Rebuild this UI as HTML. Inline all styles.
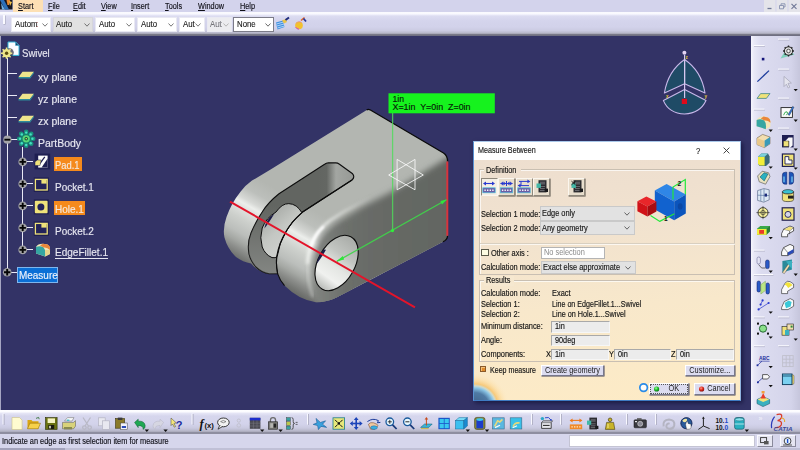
<!DOCTYPE html>
<html lang="en">
<head>
<meta charset="utf-8">
<title>Swivel - Measure Between</title>
<style>
*{box-sizing:border-box;margin:0;padding:0}
html,body{width:800px;height:450px;overflow:hidden;background:#333366}
body{position:relative;font-family:"Liberation Sans",sans-serif;font-size:8px;color:#1c1c24}
.abs{position:absolute}
.sx{display:inline-block;transform-origin:0 50%;white-space:nowrap}
/* ---------- top bars ---------- */
#menubar{position:absolute;left:0;top:0;width:800px;height:12px;background:#d3d3ec}
#menubar .mi{position:absolute;top:.9px;height:12px;line-height:11.5px;font-size:8.3px;color:#101018;-webkit-text-stroke:.15px #101018}
#menubar .mi .sx{transform:scaleX(.88)}
#startbg{position:absolute;left:13px;top:0;width:30px;height:12px;background:#fde0b4}
#winbtns{position:absolute;left:764px;top:0;width:36px;height:11.5px;background:#e4e4ea}
#tb{position:absolute;left:0;top:12px;width:800px;height:22px;background:linear-gradient(#f6f6fd 0,#fdfdff 1px,#f2f2fc 2.4px,#dcdcf1 4px,#d4d4ec 9px,#d2d2ea 15px,#cbcbe2 18.5px,#b8b8ca 21px,#9e9eac 22px)}
#tbline{position:absolute;left:0;top:34px;width:800px;height:2px;background:linear-gradient(#7e7e8c,#6a6a7e)}
.cb{position:absolute;top:17px;height:15px;background:#fff;border:1px solid #e9e9f2;font-size:8.7px;line-height:13.4px;color:#1a1a1a;overflow:hidden;-webkit-text-stroke:.12px #1a1a1a}
.cb .sx{transform:scaleX(.9);margin-left:2.6px}
.cb.g{background:#e1e1e1;border-color:#d6d6da}
.cb.d{background:#ececf0;color:#9a9aa4}
.chev{position:absolute;right:2.5px;top:4.5px;width:6px;height:4px}
/* ---------- viewport ---------- */
#vp{position:absolute;left:0;top:36px;width:751px;height:374px;background:#333366;overflow:hidden}
#vpl{position:absolute;left:0;top:36px;width:1.3px;height:374px;background:#a6a6c2}
/* ---------- tree ---------- */
.tt{position:absolute;font-size:11.6px;line-height:14px;height:14px;color:#e6e6f0;white-space:nowrap;margin-top:.6px;-webkit-text-stroke:.18px #e6e6f0}
.tt .sx{transform:scaleX(.87)}
.tl{position:absolute;background:#e9e9f6}
/* ---------- bottom ---------- */
#bt{position:absolute;left:0;top:410.4px;width:800px;height:22.6px;background:linear-gradient(#fefeff 0,#fbfbff 1.8px,#e4e4f5 3.4px,#d6d6ed 6px,#d3d3eb 14px,#cacae0 18px,#b6b6c8 21px,#9c9cac 22.6px)}
#sb{position:absolute;left:0;top:433px;width:800px;height:17px;background:#d6d6ec}
#sbtxt{position:absolute;left:2px;top:436.8px;font-size:8.2px;line-height:10px;color:#101018;-webkit-text-stroke:.15px #101018}
#sbtxt .sx{transform:scaleX(.9)}
/* ---------- right toolbar ---------- */
#rt{position:absolute;left:751px;top:36px;width:49px;height:374px;background:linear-gradient(90deg,#f6f6fd 0,#e9e9f7 3px,#dcdcf0 10px,#d4d4ea 40px,#c6c6dc 49px)}
/* ---------- dialog ---------- */
#dlg{position:absolute;left:472.6px;top:141px;width:268.4px;height:260.4px;border:1px solid #3f7cc4;border-right-color:#8fb2de;border-top-color:#a9c8ea;border-left-color:#5a92d2;background:#f2e4d2;box-shadow:1.5px 2px 4px rgba(8,8,40,.55)}
#dtitle{position:absolute;left:0;top:0;width:266px;height:18px;background:#fff}
#dbody{position:absolute;left:0;top:18px;width:266px;height:240px;background:linear-gradient(176deg,#eddecf 0,#f1e2cf 28%,#f8e8cb 60%,#fdebc6 100%)}
.dt{position:absolute;font-size:8.2px;line-height:10px;height:10px;color:#141414;white-space:nowrap;margin-top:.4px;-webkit-text-stroke:.15px #141414}
.dt .sx{transform:scaleX(.905)}

.gb{position:absolute;border:1px solid #c9bfb2;box-shadow:inset 1px 1px 0 rgba(255,255,255,.7)}
.gl{position:absolute;font-size:8.2px;line-height:10px;height:10px;padding:0 1.5px;white-space:nowrap;color:#141414;-webkit-text-stroke:.15px #141414}
.gl .sx{transform:scaleX(.89)}
.dcb{position:absolute;background:#e2e2e2;border:1px solid #c9c9c9;font-size:8.2px;line-height:14.6px;-webkit-text-stroke:.15px #141414;color:#1a1a1a;overflow:hidden;white-space:nowrap}
.dcb .sx{transform:scaleX(.905);margin-left:1.2px}
.fld{position:absolute;background:#ececec;border:1px solid #a9a9a9;border-right-color:#f6f6f6;border-bottom-color:#f6f6f6;font-size:8.2px;line-height:10.6px;color:#141414;-webkit-text-stroke:.15px #141414;overflow:hidden;white-space:nowrap}
.fld .sx{transform:scaleX(.89);margin-left:3px}
.btn{position:absolute;background:#dcdcf0;border:1px solid #fff;border-right-color:#77778c;border-bottom-color:#77778c;box-shadow:.5px .5px 0 #44445a;font-size:8.2px;line-height:9.6px;color:#1a1a1a;white-space:nowrap;text-align:center}
.btn .sx{transform:scaleX(.9);transform-origin:50% 50%}
.ib{position:absolute;top:178px;width:17px;height:17.5px;background:#e8decd;border:1px solid #fbf6ee;border-right-color:#8f887c;border-bottom-color:#8f887c;box-shadow:.6px .6px 0 #6e685e}
</style>
</head>
<body>
<div id="menubar">
  <div id="startbg"></div>
  <svg class="abs" style="left:0;top:0" width="13" height="11" viewBox="0 0 13 11"><rect width="12.5" height="9.5" fill="#161620"/><path d="M0 0 L4 0 L9 9.5 L5 9.5 Z" fill="#2c6fb8"/><path d="M1 3 L5 9.5 L2 9.5 Z" fill="#6fb2e6"/><path d="M6.5 0 L10 0 L9 5 L7.5 5 Z" fill="#e8862a"/><path d="M9 1 L12 2 L10 6 Z" fill="#f2c24a"/></svg>
  <div class="mi" style="left:18px"><span class="sx"><u>S</u>tart</span></div>
  <div class="mi" style="left:48px"><span class="sx"><u>F</u>ile</span></div>
  <div class="mi" style="left:73px"><span class="sx"><u>E</u>dit</span></div>
  <div class="mi" style="left:101px"><span class="sx"><u>V</u>iew</span></div>
  <div class="mi" style="left:131px"><span class="sx"><u>I</u>nsert</span></div>
  <div class="mi" style="left:165px"><span class="sx"><u>T</u>ools</span></div>
  <div class="mi" style="left:198px"><span class="sx"><u>W</u>indow</span></div>
  <div class="mi" style="left:240px"><span class="sx"><u>H</u>elp</span></div>
  <div id="winbtns">
    <svg class="abs" style="left:0;top:0" width="36" height="12" viewBox="0 0 36 12"><path d="M12 0V11.5M24 0V11.5" stroke="#d3d3ec" stroke-width="1"/><path d="M3.5 8.5H7.5" stroke="#6f7896" stroke-width="1.3"/><path d="M15.5 5.5H19.5V8.8H15.5Z M17 5.2V3.8H21V7H19.8" fill="none" stroke="#7b86a8" stroke-width=".8"/><path d="M27.5 3.8L32.5 8.8M32.5 3.8L27.5 8.8" stroke="#6f7896" stroke-width="1.1"/></svg>
  </div>
</div>
<div id="tb"></div>
<div id="tbline"></div>
<div class="abs" style="left:3px;top:15px;width:1.5px;height:9px;background:#fafaff;box-shadow:.6px .6px 0 #a8a8bc"></div>
<div class="cb" style="left:11px;width:40px"><span class="sx">Autom</span><span class="sx" style="color:#b55;margin-left:-3.5px">:</span><svg class="chev" viewBox="0 0 6 4"><path d="M.5 .5L3 3.2L5.5 .5" fill="none" stroke="#555" stroke-width=".8"/></svg></div>
<div class="cb g" style="left:52.5px;width:40.5px"><span class="sx">Auto</span><svg class="chev" viewBox="0 0 6 4"><path d="M.5 .5L3 3.2L5.5 .5" fill="none" stroke="#555" stroke-width=".8"/></svg></div>
<div class="cb" style="left:95px;width:40px"><span class="sx">Auto</span><svg class="chev" viewBox="0 0 6 4"><path d="M.5 .5L3 3.2L5.5 .5" fill="none" stroke="#555" stroke-width=".8"/></svg></div>
<div class="cb" style="left:137px;width:40px"><span class="sx">Auto</span><svg class="chev" viewBox="0 0 6 4"><path d="M.5 .5L3 3.2L5.5 .5" fill="none" stroke="#555" stroke-width=".8"/></svg></div>
<div class="cb" style="left:179px;width:25.5px"><span class="sx">Aut</span><svg class="chev" viewBox="0 0 6 4"><path d="M.5 .5L3 3.2L5.5 .5" fill="none" stroke="#555" stroke-width=".8"/></svg></div>
<div class="cb d" style="left:206.5px;width:25.5px"><span class="sx">Aut</span><svg class="chev" viewBox="0 0 6 4"><path d="M.5 .5L3 3.2L5.5 .5" fill="none" stroke="#aaa" stroke-width=".8"/></svg></div>
<div class="cb" style="left:233px;width:41px;border-color:#7c7c88"><span class="sx">None</span><svg class="chev" viewBox="0 0 6 4"><path d="M.5 .5L3 3.2L5.5 .5" fill="none" stroke="#444" stroke-width=".8"/></svg></div>
<svg class="abs" style="left:275px;top:16px" width="34" height="16" viewBox="0 0 34 16"><path d="M1 6.5L8 4.5L9.5 11L2.5 13.5Z" fill="#3f8fe0"/><path d="M1.5 8L8.5 6M2 10L9 8M2.5 12L9.5 10" stroke="#dff0ff" stroke-width=".7"/><path d="M7 4.5L10.5 3L12 6L9 7.5Z" fill="#e9c44a"/><path d="M10.5 4L14 1.5" stroke="#1d2a7a" stroke-width="2"/><circle cx="24" cy="9.4" r="3.8" fill="#f2c12e"/><path d="M20.4,8.4a3.8,3.8 0 0 1 6.6,-1.4a5,5 0 0 0 -6.600,1.400z" fill="#e060d8"/><path d="M20.600,11a3.800,3.800 0 0 0 3.400,2.200" stroke="#d048c8" stroke-width="1" fill="none"/><path d="M26 4.5L29.5 1.5" stroke="#e0662a" stroke-width="1.6"/><path d="M28.5 2.5L31 5.5" stroke="#27349a" stroke-width="1.8"/></svg>

<div id="vp"></div>
<div id="vpl"></div>
<svg id="part" class="abs" style="left:0;top:0" width="800" height="450" viewBox="0 0 800 450">
<defs>
  <clipPath id="sil"><path id="silp" d="M366,110.4 Q368.2,108.6 370.4,110 L443.5,153 Q447.6,155.6 447.6,161 L447.6,235.5 Q447.6,239.6 443,241.8 L336,297.8 Q326,302.4 316,302.2 Q299,300 285,286 Q279.5,279.5 277.6,273.6 L269.2,273.8 Q258,272 251,263.5 Q243,262 236,257 Q227.5,249 224.4,237.2 Q222.6,228 226.5,217 Q231.5,203 240.5,191.8 Q245,185.6 252,180.6 L270.6,169.6 Z"/></clipPath>
  <linearGradient id="gCyl" x1="296.9" y1="200.7" x2="255.2" y2="273.6" gradientUnits="userSpaceOnUse">
    <stop offset="0.0" stop-color="#b3b6b1"/><stop offset="0.167" stop-color="#bcbfbb"/><stop offset="0.286" stop-color="#d6d8d5"/><stop offset="0.339" stop-color="#eceeeb"/><stop offset="0.393" stop-color="#e0e2df"/><stop offset="0.512" stop-color="#cdd0cc"/><stop offset="0.667" stop-color="#bbbebb"/><stop offset="0.762" stop-color="#a5a8a4"/><stop offset="0.845" stop-color="#8b8d8a"/><stop offset="0.929" stop-color="#737572"/><stop offset="1.0" stop-color="#626461"/>
  </linearGradient>
  <linearGradient id="gFar" x1="0" y1="178" x2="0" y2="268" gradientUnits="userSpaceOnUse">
    <stop offset="0" stop-color="#b4b7b2"/><stop offset=".18" stop-color="#c9ccc8"/><stop offset=".3" stop-color="#e4e6e3"/><stop offset=".45" stop-color="#c6c9c5"/><stop offset=".7" stop-color="#b4b6b3"/><stop offset=".9" stop-color="#8b8d8a"/><stop offset="1" stop-color="#6f716e"/>
  </linearGradient>
  <linearGradient id="gNear" x1="0" y1="205" x2="0" y2="303" gradientUnits="userSpaceOnUse">
    <stop offset="0" stop-color="#b4b7b2"/><stop offset=".2" stop-color="#cfd2ce"/><stop offset=".36" stop-color="#e6e8e5"/><stop offset=".55" stop-color="#c9ccc8"/><stop offset=".75" stop-color="#a9aba8"/><stop offset=".92" stop-color="#7d7f7c"/><stop offset="1" stop-color="#6a6c69"/>
  </linearGradient>
  <linearGradient id="gSlot" x1="318" y1="0" x2="354" y2="0" gradientUnits="userSpaceOnUse">
    <stop offset="0" stop-color="#626561"/><stop offset=".24" stop-color="#646763"/><stop offset=".5" stop-color="#a3a6a2"/><stop offset="1" stop-color="#969995"/>
  </linearGradient>
  <linearGradient id="gRing" x1="0" y1="205" x2="0" y2="270" gradientUnits="userSpaceOnUse">
    <stop offset="0" stop-color="#fff" stop-opacity="0"/><stop offset="1" stop-color="#fff" stop-opacity=".2"/>
  </linearGradient>
  <linearGradient id="gHoleF" x1="354" y1="243" x2="322" y2="288" gradientUnits="userSpaceOnUse">
    <stop offset="0" stop-color="#adb0ac"/><stop offset=".3" stop-color="#c2c5c1"/><stop offset=".55" stop-color="#e4e6e3"/><stop offset=".78" stop-color="#f0f1ef"/><stop offset="1" stop-color="#bcbebb"/>
  </linearGradient>
  <linearGradient id="gHoleB" x1="262" y1="210" x2="296" y2="250" gradientUnits="userSpaceOnUse">
    <stop offset="0" stop-color="#9fa29e"/><stop offset=".5" stop-color="#c4c7c3"/><stop offset="1" stop-color="#d2d4d1"/>
  </linearGradient>
  <linearGradient id="gFront" x1="300" y1="0" x2="450" y2="0" gradientUnits="userSpaceOnUse"><stop offset="0" stop-color="#8e918d"/><stop offset=".12" stop-color="#7f827e"/><stop offset=".3" stop-color="#6d706c"/><stop offset=".5" stop-color="#676a66"/><stop offset="1" stop-color="#626561"/></linearGradient>
  <linearGradient id="gHi" x1="305" y1="0" x2="372" y2="0" gradientUnits="userSpaceOnUse"><stop offset="0" stop-color="#f6f8f5" stop-opacity=".85"/><stop offset=".3" stop-color="#f2f4f1" stop-opacity=".7"/><stop offset="1" stop-color="#e0e2df" stop-opacity="0"/></linearGradient>
  <filter id="bl3" x="-50%" y="-50%" width="200%" height="200%"><feGaussianBlur stdDeviation="1"/></filter>
  <filter id="bl" x="-20%" y="-20%" width="140%" height="140%"><feGaussianBlur stdDeviation="3.4"/></filter>
  <filter id="bl2" x="-20%" y="-20%" width="140%" height="140%"><feGaussianBlur stdDeviation="1.6"/></filter>
</defs>
<g clip-path="url(#sil)">
  <!-- base: top face colour + cylinder shading as function of distance from hole axis -->
  <rect x="215" y="100" width="240" height="210" fill="url(#gCyl)"/>
  <!-- front face (dark) blurred for fillet shading -->
  <g filter="url(#bl)">
    <path d="M462,149 L392,191.5 L362.5,206.5 L338,221.5 Q326,229.5 319,240 Q313,252 312,270 Q312,290 318,306 L336,318 L462,252 Z" fill="url(#gFront)"/>
  </g>
  <path d="M345,224 L334,230 Q324,238 319.5,248 Q315.5,259 315.5,272 Q316,290 321,304 L352,300 Z" fill="url(#gFront)" filter="url(#bl2)" opacity=".8"/>
  <!-- fillet highlight -->
  <path d="M376,195 L345,211 L330,220.5 Q318,229.5 312,242 Q308,252 307.5,264" fill="none" stroke="url(#gHi)" stroke-width="3.2" filter="url(#bl2)"/>
  <path d="M323,227 Q314.5,235 311,246" fill="none" stroke="#ffffff" stroke-width="2.4" stroke-linecap="round" filter="url(#bl3)"/>
  <path d="M307.5,264 Q307,280 312.5,296" fill="none" stroke="#dfe1de" stroke-width="3" stroke-linecap="round" filter="url(#bl2)" opacity=".4"/>
</g>
<!-- slot / far lug inner face (dark) -->
<path d="M324.6,164.2 Q326.2,163 328.5,162.8 L335.8,162.9 Q337.6,162.9 339.5,164.2 L352.6,173.8 Q355.2,177 352,180 L302.2,212.3 Q291,222 286,231.6 Q279,243 276.8,256 Q275.8,266 277.6,273.6 L269.2,273.8 Q262,272.6 256,267 Q250.6,261 249,254 Q247,243 251,233 Q256,221 262.2,212 Q268,202.6 279,193.8 Z" fill="url(#gSlot)" stroke="#0c0c0c" stroke-width="1.1" stroke-linejoin="round"/>
<path d="M324.6,164.2 Q326.2,163 328.5,162.8 L335.8,162.9 Q337.6,162.9 339.5,164.2 L352.6,173.8 Q355.2,177 352,180 L302.2,212.3 Q291,222 286,231.6 Q279,243 276.8,256 Q275.8,266 277.6,273.6 L269.2,273.8 Q262,272.6 256,267 Q250.6,261 249,254 Q247,243 251,233 Q256,221 262.2,212 Q268,202.6 279,193.8 Z" fill="url(#gRing)" />
<!-- far hole -->
<path d="M276,212 Q282,203.4 288.8,203.6 Q297,204 301.8,212.6 Q291,222 286,231.6 Q279,243 277.2,256.4 Q275.6,258.4 272,257.6 Q265,254.6 262.2,247 Q259.4,238 262.2,228 Q266,218 276,212 Z" fill="url(#gHoleB)" stroke="#0c0c0c" stroke-width="1" stroke-linejoin="round"/>
<path d="M274.5,213.5 Q266,219 264.3,228.5 Q268.5,223.5 274.5,213.5 Z" fill="#1c1c48"/>
<!-- near lug left silhouette line -->
<path d="M352,180 L302.2,212.3 Q291,222 286,231.6 Q279,243 276.8,256 Q275.8,266 277.6,273.6 Q279.6,280 284.5,285.6" fill="none" stroke="#0c0c0c" stroke-width="1.1"/>
<!-- front hole -->
<path d="M322.33,289.16 A29.8,18.3 118.6 1 0 350.87,236.84 A29.8,18.3 118.6 1 0 322.33,289.16 Z" fill="url(#gHoleF)" stroke="#0c0c0c" stroke-width="1.1"/>
<path d="M323.5,249.5 Q318,256 316.6,264 Q322,257 326,249.8 Z" fill="#1c1c48"/>
<!-- black edges -->
<path d="M366.6,110 Q368.2,108.8 370.4,110 L443.5,153 Q447.6,155.6 447.6,161.5" fill="none" stroke="#0a0a0a" stroke-width="1.3"/>
<path d="M447.6,235.5 Q447.6,239.6 443,241.8" fill="none" stroke="#0a0a0a" stroke-width="1.2"/>
<!-- red edge -->
<path d="M447.3,161.5 L447.3,235.8" stroke="#d8343c" stroke-width="2"/>
<!-- measure graphics -->
<path d="M392.6,113 L392.6,230.5" stroke="#4fdc5a" stroke-width="1.3" opacity=".8"/>
<path d="M336.8,261.4 L446.5,199.8" stroke="#3fd64a" stroke-width="1.3" opacity=".92"/>
<path d="M336.4,261.6 L342.8,256 L344.2,259.6 Z M446.8,199.6 L440.4,201 L442,204.6 Z" fill="#2fe63a"/>
<circle cx="392.5" cy="230.6" r="1.6" fill="#2ff03a"/>
<path d="M230,201.6 L415,307.4" stroke="#e4142a" stroke-width="1.9"/>
<g fill="none" stroke="#fafafa" stroke-width=".9" opacity=".95"><path d="M397.1,159.4 L397.1,189.8 L423.3,175 Z"/><path d="M415,159.4 L415,189.8 L388.7,175 Z"/></g>
<!-- green label -->
<rect x="388.5" y="93.3" width="106.3" height="20" fill="#16f21e"/>
<text x="392.5" y="102" font-family="'Liberation Sans',sans-serif" font-size="8.4" fill="#062006" stroke="#062006" stroke-width=".15" textLength="11.5" lengthAdjust="spacingAndGlyphs">1in</text>
<text x="392.5" y="109.8" font-family="'Liberation Sans',sans-serif" font-size="8.4" fill="#062006" stroke="#062006" stroke-width=".15" textLength="78" lengthAdjust="spacingAndGlyphs" xml:space="preserve">X=1in  Y=0in  Z=0in</text>
</svg>

<svg class="abs" style="left:650px;top:40px" width="80" height="85" viewBox="650 40 80 85">
  <g fill="#1f4b66" stroke="#c9b8ea" stroke-width="1.1" stroke-linejoin="round">
    <path d="M684.6,59.5 Q668,71 664.4,93 L684.6,83.8 Z"/>
    <path d="M684.6,59.5 Q701.5,71 705,93 L684.6,83.8 Z"/>
    <path d="M663.4,100.6 L684.6,89.6 L706,100.6 Q700,113.6 684.6,114 Q669,113.6 663.4,100.6 Z"/>
  </g>
  <path d="M684.6,55 V98" stroke="#d6c8f0" stroke-width="1.2"/>
  <circle cx="684.4" cy="52.8" r="2" fill="#e3d4f4"/>
  <rect x="681.8" y="98.8" width="5.2" height="5.2" fill="#e00a1a"/>
  <g font-family="'Liberation Sans',sans-serif" font-size="4.5" fill="#e6c83a" font-weight="bold"><text x="685.6" y="58.6">z</text><text x="666" y="98">x</text><text x="704.6" y="98">y</text></g>
</svg>

<div id="tree">
  <!-- lines -->
  <div class="tl" style="left:6.6px;top:58px;width:1.3px;height:214px"></div>
  <div class="tl" style="left:22.1px;top:147px;width:1.3px;height:103px"></div>
  <div class="tl" style="left:7px;top:73px;width:10px;height:1.3px"></div>
  <div class="tl" style="left:7px;top:95px;width:10px;height:1.3px"></div>
  <div class="tl" style="left:7px;top:117px;width:10px;height:1.3px"></div>
  <div class="tl" style="left:7px;top:139px;width:11px;height:1.3px"></div>
  <div class="tl" style="left:22px;top:161px;width:11px;height:1.3px"></div>
  <div class="tl" style="left:22px;top:183px;width:11px;height:1.3px"></div>
  <div class="tl" style="left:22px;top:205px;width:11px;height:1.3px"></div>
  <div class="tl" style="left:22px;top:227px;width:11px;height:1.3px"></div>
  <div class="tl" style="left:22px;top:249px;width:11px;height:1.3px"></div>
  <div class="tl" style="left:7px;top:272px;width:10px;height:1.3px"></div>
  <!-- highlights -->
  <div class="abs" style="left:53.5px;top:156.5px;width:28px;height:14.5px;background:#f58a1c"></div>
  <div class="abs" style="left:53.5px;top:200.5px;width:31.5px;height:14.5px;background:#f58a1c"></div>
  <div class="abs" style="left:17px;top:267px;width:41px;height:15.5px;background:#0b6fd6;border:.5px solid #7fb6ee"></div>
  <!-- labels -->
  <div class="tt" style="left:22px;top:45.600px"><span class="sx" style="transform:scaleX(0.828)">Swivel</span></div>
  <div class="tt" style="left:38px;top:69.4px"><span class="sx" style="transform:scaleX(0.903)">xy plane</span></div>
  <div class="tt" style="left:38px;top:91.4px"><span class="sx" style="transform:scaleX(0.903)">yz plane</span></div>
  <div class="tt" style="left:38px;top:113.4px"><span class="sx" style="transform:scaleX(0.903)">zx plane</span></div>
  <div class="tt" style="left:38px;top:135px"><span class="sx" style="transform:scaleX(0.901)">PartBody</span></div>
  <div class="tt" style="left:55px;top:157px;color:#fbe9d4"><span class="sx" style="transform:scaleX(0.808)">Pad.1</span></div>
  <div class="tt" style="left:55px;top:179px"><span class="sx" style="transform:scaleX(0.859)">Pocket.1</span></div>
  <div class="tt" style="left:55px;top:201px;color:#fbe9d4"><span class="sx" style="transform:scaleX(0.858)">Hole.1</span></div>
  <div class="tt" style="left:55px;top:223px"><span class="sx" style="transform:scaleX(0.859)">Pocket.2</span></div>
  <div class="tt" style="left:55px;top:244.5px"><span class="sx" style="transform:scaleX(.866);text-decoration:underline;text-underline-offset:1.5px">EdgeFillet.1</span></div>
  <div class="tt" style="left:19px;top:267px;color:#eef5ff"><span class="sx" style="transform:scaleX(0.859)">Measure</span></div>
  <!-- icons -->
  <svg class="abs" style="left:0;top:36px" width="60" height="250" viewBox="0 36 60 250">
    <!-- root icon -->
    <path d="M8,42 L15.5,42 L19,45.5 L19,55.4 L8,55.4 Z" fill="#fbfdff" stroke="#33b6d8" stroke-width="1"/>
    <path d="M15.5,42 L15.5,45.5 L19,45.5 Z" fill="#1d3f66" stroke="#33b6d8" stroke-width=".5"/>
    <circle cx="9.400" cy="52.600" r="4.400" fill="#2a2a3a" opacity=".7"/><circle cx="6.6" cy="53.2" r="4.2" fill="#eee689"/>
    <g stroke="#eee689" stroke-width="1.6"><path d="M6.6,47.6V58.8M1,53.2H12.2M2.6,49.2L10.6,57.2M10.6,49.2L2.6,57.2"/></g>
    <circle cx="6.6" cy="53.2" r="1.7" fill="#5a4a10"/>
    <!-- planes -->
    <g id="pl"><path d="M22.5,71.8 L34,71.8 L30,77 L18.5,77 Z" fill="#efe58c"/><path d="M18.5,77 L30,77 L34,71.8 L34,73.2 L30.2,78.6 L18.5,78.6 Z" fill="#2e8c9a"/></g>
    <use href="#pl" y="22"/><use href="#pl" y="44"/>
    <!-- PartBody node + icon -->
    <circle cx="7.4" cy="139.7" r="4.1" fill="#a4a4a8"/><path d="M4.400,139.700H10.400" stroke="#080808" stroke-width="1.900"/>
    <g><circle cx="26.200" cy="138.800" r="6.200" fill="#14806e"/><g fill="#19907c"><circle cx="26.200" cy="131.800" r="2.300"/><circle cx="26.200" cy="145.800" r="2.300"/><circle cx="19.200" cy="138.800" r="2.300"/><circle cx="33.200" cy="138.800" r="2.300"/><circle cx="21.200" cy="133.800" r="2.300"/><circle cx="31.200" cy="133.800" r="2.300"/><circle cx="21.200" cy="143.800" r="2.300"/><circle cx="31.200" cy="143.800" r="2.300"/></g><g fill="#46e0c4"><circle cx="26.200" cy="132.600" r="1.200"/><circle cx="26.200" cy="145" r="1.200"/><circle cx="20" cy="138.800" r="1.200"/><circle cx="32.400" cy="138.800" r="1.200"/><circle cx="21.800" cy="134.400" r="1.200"/><circle cx="30.600" cy="134.400" r="1.200"/><circle cx="21.800" cy="143.200" r="1.200"/><circle cx="30.600" cy="143.200" r="1.200"/></g><circle cx="26.200" cy="138.800" r="3.600" fill="#58d878"/><circle cx="26.200" cy="138.800" r="1.700" fill="#0c4a40"/><circle cx="26.200" cy="138.800" r=".8" fill="#d8e85a"/></g>
    <!-- plus nodes -->
    <g id="pn"><circle cx="22.700" cy="161.900" r="4.300" fill="#a0a0a4"/><path d="M19.500,161.900H25.900M22.700,158.700V165.100" stroke="#050505" stroke-width="1.900"/></g>
    <use href="#pn" y="22"/><use href="#pn" y="44"/><use href="#pn" y="66"/><use href="#pn" y="88"/><use href="#pn" x="-15.500" y="110.400"/>
    <!-- Pad icon -->
    <rect x="34.6" y="153.6" width="15.6" height="15.8" fill="#1f1f52"/><rect x="38.2" y="155.6" width="9.4" height="12" fill="#fdfdfd"/><path d="M41.600,167.600 L47.600,158.500 L47.600,167.600 Z" fill="#1f1f52"/><path d="M39.600,163.800 L44.800,156.800" stroke="#1f1f52" stroke-width="1.300"/><path d="M35,161.800 L37.400,160 L41.200,160 L40,165.600 L35,165.600 Z" fill="#efe27a" stroke="#1f1f52" stroke-width=".5"/>
    <!-- Pocket icons -->
    <g id="pk"><rect x="33.800" y="177.400" width="15" height="14.600" fill="#1f1f52"/><rect x="35.400" y="179.400" width="11.800" height="10.600" fill="#23235a" stroke="#efe27a" stroke-width="1.300"/><rect x="41.400" y="180" width="5.200" height="3.600" fill="#efe27a"/></g>
    <use href="#pk" y="44"/>
    <!-- Hole icon -->
    <rect x="33.800" y="199.400" width="15" height="15" fill="#1f1f52"/><rect x="34.800" y="200.800" width="12.800" height="12.400" rx="1" fill="#efe27a"/><circle cx="40.900" cy="207.100" r="3.500" fill="#23235a"/>
    <!-- EdgeFillet icon -->
    <path d="M36,247 Q38,243.6 43,243.8 L47.5,244.6 Q50.4,246 50,250 L50,254 L45,256.4 L36,253.4 Z" fill="#f2e6b8"/><path d="M36,247 Q40,245 43.6,247.6 Q46,250 45.2,256.4 L36,253.4 Z" fill="#36a6a2"/><path d="M43,243.8 L47.5,244.6 Q50.4,246 50,250 Q47,247 43.6,247.6 Q41.5,246 40,245.6 Z" fill="#e9863a"/><path d="M45.2,250 L50,250 L50,254 L45.2,256.4 Z" fill="#e8d68c"/>
  </svg>
</div>

<div id="rt"></div>
<svg class="abs" style="left:751px;top:36px" width="49" height="374" viewBox="751 36 49 374">
  <defs>
    <g id="rs"><rect x="0" y="0" width="11" height="1.2" fill="#fbfbff"/><rect x=".5" y="1.2" width="11" height=".7" fill="#b4b4c8"/></g>
    <path id="rd" d="M0,0h4.200l-2.100,2.300z" fill="#111"/>
  </defs>
  <!-- separators -->
  <use href="#rs" x="778" y="38.600"/><use href="#rs" x="753.500" y="45"/><use href="#rs" x="778" y="68.600"/><use href="#rs" x="778" y="97.600"/><use href="#rs" x="753.500" y="108.600"/><use href="#rs" x="778" y="127.600"/><use href="#rs" x="753.500" y="249.600"/><use href="#rs" x="753.500" y="274"/><use href="#rs" x="762" y="274"/><use href="#rs" x="753.500" y="316.400"/><use href="#rs" x="778" y="316.400"/><use href="#rs" x="753.500" y="345.200"/><use href="#rs" x="778" y="345.200"/>
  <!-- point -->
  <rect x="761.800" y="57.800" width="2.600" height="2.600" fill="#14147a"/>
  <!-- gear/sketch exit -->
  <path d="M780.500,58.500l6,-10l8,6z" fill="#6ad0b0" opacity=".8"/><circle cx="788.500" cy="51" r="4.200" fill="#d8d8d8" stroke="#222" stroke-width="1"/><circle cx="788.500" cy="51" r="1.800" fill="#f4f4f4" stroke="#222" stroke-width=".7"/><g stroke="#222" stroke-width="1.300"><path d="M788.500,45.600v1.400M788.500,55v1.400M783.100,51h1.400M792.500,51h1.400M784.700,47.200l1,1M791.300,53.800l1,1M792.300,47.200l-1,1M785.700,53.800l-1,1"/></g>
  <!-- line -->
  <path d="M757.400,81.600l11.600,-11" stroke="#1c3c9c" stroke-width="1.300"/>
  <!-- cursor (gray) -->
  <path d="M784,76.400l7.400,6.600l-3.400,.4l1.800,3.800l-1.600,.8l-1.800,-3.800l-2.400,2.400z" fill="#e4e4ee" stroke="#a4a4b4" stroke-width=".7"/><use href="#rd" x="793.600" y="89"/>
  <!-- plane -->
  <path d="M760.600,93.600h9.400l-3.600,4.800h-9.400z" fill="#efe27a" stroke="#2a7a8a" stroke-width=".7"/>
  <!-- sketcher -->
  <rect x="781" y="107.600" width="11.400" height="9.800" fill="#fbfbfb" stroke="#222" stroke-width=".9"/><path d="M783.600,115.200q1,-4 3.400,-3.400q1.600,1 -.6,3.400" fill="none" stroke="#2aa84a" stroke-width=".9"/><path d="M788,114.600l4.600,-8.200l1.400,.8l-4.600,8.200z" fill="#3a7ad8" stroke="#123" stroke-width=".4"/><use href="#rd" x="793.600" y="119.600"/>
  <!-- pad (teal/orange) -->
  <path d="M756.600,120q2,-3.600 7,-3.400l4.400,.8q2.800,1.400 2.400,5.400v4l-4.600,2.400l-9.200,-3z" fill="#f2e6b8"/><path d="M756.600,120q4,-2 7.600,.6q2.400,2.400 1.600,8.600l-9.200,-3z" fill="#36a6a2"/><path d="M763.600,116.600l4.400,.8q2.800,1.400 2.400,5.400q-3,-3 -6.200,-2.200q-2,-1.600 -3.400,-2z" fill="#e9863a"/><use href="#rd" x="768.600" y="129.600"/>
  <!-- pocket-ish (cube w/ notch) -->
  <path d="M757,138l5.600,-3.600l7.400,2.600v6.800l-5.600,3.800l-7.400,-3z" fill="#f2deb0" stroke="#5a4a2a" stroke-width=".5"/><path d="M764.400,140.800l5.600,-3.800v6.800l-5.600,3.800z" fill="#3a9ab8"/><path d="M757,138l7.400,2.800v6.800l-7.400,-3z" fill="#e8c88a"/>
  <!-- pad sketch (right) -->
  <rect x="782" y="135" width="11.600" height="12.400" fill="#1f1f52"/><path d="M785.200,141l3.400,-3.400h4v8l-3.400,2.800v-7.400z" fill="#fafafa"/><rect x="783.400" y="141" width="5.400" height="5.400" fill="#efe27a" stroke="#222" stroke-width=".4"/><use href="#rd" x="793.600" y="148.600"/>
  <!-- yellow prism -->
  <path d="M758,156.800l3.400,-3.400h6.600l1.600,3v6.400l-3.600,3.200h-6.600l-1.400,-2.400z" fill="#3a6a7a"/><path d="M758,156.800h6.600v8.600h-5.200l-1.400,-2.200z" fill="#f2ee3a"/><path d="M758,156.800l3.400,-3.400h6.600l-3.400,3.400z" fill="#7ad0d8"/><use href="#rd" x="768.600" y="166.400"/>
  <!-- pocket (right) -->
  <rect x="782.400" y="154" width="11.600" height="12.400" fill="#efe27a" stroke="#1f1f52" stroke-width="1.200"/><path d="M785,156.600h3.800v3.400h3.200v4h-7z" fill="#fafafa" stroke="#1f1f52" stroke-width=".9"/><use href="#rd" x="793.600" y="167.400"/>
  <!-- groove teal -->
  <path d="M757.600,176l4.600,-4.800l6.400,1.600l1.400,3.800l-4.400,7.600l-6.400,-2.400z" fill="#e8e2c0" stroke="#333" stroke-width=".5"/><path d="M760,177l4,-4.200l4,1.200l-3.800,7z" fill="#2ab0c0" stroke="#0a4a5a" stroke-width=".5"/>
  <!-- split cylinders -->
  <path d="M782.400,175q0,-2.800 3,-2.800h1.400v12h-1.400q-3,0 -3,-2.800z" fill="#1c54b8" stroke="#0a1a5a" stroke-width=".5"/><path d="M793.600,175q0,-2.800 -3,-2.800h-1.400v12h1.400q3,0 3,-2.800z" fill="#1c54b8" stroke="#0a1a5a" stroke-width=".5"/><path d="M784,176.600v5.600M792,176.600v5.600" stroke="#7ad0f0" stroke-width="1.200"/>
  <!-- stiffener/ribs -->
  <path d="M757.600,190.600l6.200,-2l5.400,1.200v10l-5.400,2.400l-6.200,-1.800z" fill="#dce8f4" stroke="#4a5a7a" stroke-width=".6"/><path d="M760.800,189.600v11.400M764,188.800v12.800M757.600,195.200l11.600,.4" stroke="#4a6a9a" stroke-width=".6"/><rect x="764.600" y="193.600" width="2.400" height="3" fill="#1c2c7a"/>
  <!-- cylinder yellow/teal -->
  <ellipse cx="788" cy="191.800" rx="5.600" ry="2.200" fill="#3ac0d0" stroke="#222" stroke-width=".6"/><path d="M782.400,191.800v7.600q0,2.200 5.600,2.200q5.600,0 5.600,-2.200v-7.600q0,2.200 -5.600,2.200q-5.600,0 -5.600,-2.200z" fill="#efe27a" stroke="#222" stroke-width=".6"/><path d="M788,195.600h5.600v3h-5.600z" fill="#222"/>
  <!-- crosshair -->
  <circle cx="763" cy="212.600" r="5" fill="#f4ee9a" stroke="#222" stroke-width=".8"/><circle cx="763" cy="212.600" r="2.200" fill="none" stroke="#222" stroke-width=".6"/><path d="M763,206v13.200M756.400,212.600h13.200" stroke="#222" stroke-width=".6"/>
  <!-- hole -->
  <rect x="782.200" y="207.800" width="11.800" height="12.400" fill="#efe27a" stroke="#1f1f52" stroke-width="1.200"/><circle cx="788" cy="214.400" r="3" fill="#d4d4e8" stroke="#1f1f52" stroke-width=".9"/>
  <!-- box red -->
  <path d="M757,229l3.600,-3h9.400v5.600l-3.400,3.200h-9.600z" fill="#2a7a3a"/><path d="M757,229h9.600v5.800h-9.600z" fill="#f2ee3a"/><path d="M757,229l3.600,-3h9.400l-3.400,3z" fill="#3aa84a"/><rect x="759.200" y="230" width="4.800" height="3.800" fill="#e83a2a"/><use href="#rd" x="768.600" y="237"/>
  <!-- white shape r -->
  <path d="M781.600,233.600l2,-4.400l6.400,-3.200l3.600,1.600v3.400l-6,3.200v2.600h-6z" fill="#fafafa" stroke="#222" stroke-width=".7"/><path d="M783.600,229.200l6,1.600l4,-3.200M789.600,230.800v3.400" fill="none" stroke="#222" stroke-width=".5"/><path d="M784,229.600l5.600,-2.800l3.400,1l-3.400,2.800z" fill="#f2e27a"/>
  <!-- white/blue r -->
  <path d="M781.600,252l2,-4.400l6.400,-3.200l3.600,1.600v6.600l-6,3h-6z" fill="#fafafa" stroke="#222" stroke-width=".7"/><path d="M787.600,252.400l6,-3.400v3.600l-6,3z" fill="#2a4ab8"/><path d="M783.600,247.600l4,4.800M787.600,252.400v3.200" stroke="#222" stroke-width=".5"/>
  <!-- blue cylinders l -->
  <rect x="757" y="257" width="3.400" height="7" rx="1.600" fill="#e4e4f4" stroke="#5a5a8a" stroke-width=".5"/><rect x="765.600" y="260" width="3.600" height="8.600" rx="1.600" fill="#2a5ac8" stroke="#0a1a5a" stroke-width=".5"/><path d="M758.600,264.600l3,3.400h4" fill="none" stroke="#222" stroke-width=".6"/><use href="#rd" x="768.600" y="270.600"/>
  <!-- teal draft r -->
  <path d="M782.400,272.600v-11.600l9.600,-1.600v10z" fill="#2a8a9a"/><path d="M782.400,272.600l8,-11.600l1.800,1.200l-7.800,11.400z" fill="#f2deb0" stroke="#333" stroke-width=".4"/><path d="M786,261.600l6,-1v8.600" fill="#3ab0c0"/><use href="#rd" x="793.600" y="273.600"/>
  <!-- cylinders + plane -->
  <rect x="757" y="281" width="3.400" height="11" rx="1.600" fill="#2a5ac8" stroke="#0a1a5a" stroke-width=".5"/><rect x="766" y="283" width="3.400" height="11" rx="1.600" fill="#2a5ac8" stroke="#0a1a5a" stroke-width=".5"/><path d="M760.800,284.600l4.600,-3.400v9.400l-4.600,3.400z" fill="#b8e87a" opacity=".9" stroke="#5a8a2a" stroke-width=".4"/>
  <!-- yellow r -->
  <path d="M781.600,289.600l3.400,-6.400q2.400,-3 5,-1.600l3.600,2.400v3.600l-6,3.600v2.400h-6z" fill="#fafafa" stroke="#222" stroke-width=".6"/><path d="M784.600,284.400q2.400,-3 5,-1.600l3,2.200l-4.400,3q-1.400,-3 -3.600,-3.600z" fill="#f2e23a"/>
  <!-- dots l -->
  <g fill="#2a3ad0"><circle cx="758.600" cy="309.400" r="1.100"/><circle cx="762.600" cy="300.400" r="1.100"/><circle cx="768.600" cy="303" r="1.100"/><circle cx="760.600" cy="304.600" r="1.100"/></g><path d="M758.600,309.400l10,-6.400M762.600,300.400l-2,4.200" stroke="#2a3ad0" stroke-width=".7"/><use href="#rd" x="768.600" y="311.400"/>
  <!-- teal/white r -->
  <path d="M781.600,307.600l2.600,-6l6,-3l3.400,1.800v5.800l-5.600,3.400h-6.400z" fill="#fafafa" stroke="#222" stroke-width=".6"/><path d="M784.600,303l4,-2.400l3,1.400l-1,4.600l-4.600,1.600z" fill="#3ac8d8"/>
  <!-- green circle corners -->
  <circle cx="763" cy="328.600" r="3.600" fill="#8ae08a" stroke="#1a5a2a" stroke-width=".9"/><g fill="#111"><rect x="757" y="322.600" width="2" height="2"/><rect x="767" y="322.600" width="2" height="2"/><rect x="757" y="332.600" width="2" height="2"/><rect x="767" y="332.600" width="2" height="2"/></g><use href="#rd" x="768.600" y="336.400"/>
  <!-- boxes r -->
  <rect x="782" y="326.600" width="7" height="8.600" fill="#efe27a" stroke="#222" stroke-width=".6"/><rect x="787" y="324" width="6.600" height="6" fill="#f2deb0" stroke="#222" stroke-width=".6"/><rect x="785" y="330" width="4" height="5.200" fill="#3ab0c0"/><rect x="790.600" y="325.600" width="2" height="2" fill="#2a8a3a"/><use href="#rd" x="793.600" y="338.400"/>
  <!-- ABC -->
  <text x="759" y="360" font-family="'Liberation Sans',sans-serif" font-weight="bold" font-size="5.600" fill="#1c2c9c" textLength="10.500" lengthAdjust="spacingAndGlyphs">ABC</text><path d="M759,361.200h10.600" stroke="#1c2c9c" stroke-width=".6"/><path d="M762,361.200l-4.400,4" stroke="#1c2c9c" stroke-width=".7"/><rect x="756.600" y="364.400" width="1.800" height="1.800" fill="#1c2c9c"/><use href="#rd" x="768.600" y="366"/>
  <!-- grey grid r -->
  <g fill="none" stroke="#c0c0cc" stroke-width=".9"><rect x="782.600" y="355.600" width="10.600" height="11"/><path d="M782.600,359.200h10.600M782.600,362.800h10.600M786.200,355.600v11M789.800,355.600v11"/></g>
  <!-- label tag -->
  <path d="M762.600,374.600h5l2,2.200l-2,2.200h-5z" fill="#fafafa" stroke="#222" stroke-width=".7"/><path d="M762.600,378l-4.600,4" stroke="#1c2c9c" stroke-width=".7"/><rect x="757" y="381.400" width="1.800" height="1.800" fill="#1c2c9c"/><use href="#rd" x="768.600" y="385"/>
  <!-- blue box r -->
  <rect x="782.400" y="374" width="9.600" height="10.600" fill="#7ad0f0" stroke="#0a3a5a" stroke-width=".9"/><path d="M782.400,376h9.600" stroke="#0a3a5a" stroke-width=".8"/><path d="M792.400,374.600l1.600,1v8l-1.600,1z" fill="#efe27a" stroke="#333" stroke-width=".4"/>
  <!-- red/yellow/teal bottom -->
  <path d="M757,399.600l6,-3l6.600,3v4l-6.600,3l-6,-3z" fill="#3ab0c0" stroke="#0a4a5a" stroke-width=".5"/><path d="M757.600,399.400l5.600,-2.600l6,2.600l-6,2.600z" fill="#f2e27a"/><path d="M760.600,398.600l2.600,-5.600l2.600,5.600z" fill="#e83a2a"/><rect x="761.600" y="391" width="3" height="2.400" fill="#f2a03a"/>
</svg>

<div id="bt"></div>
<div id="sb"></div>
<div class="abs" style="left:0;top:432.4px;width:800px;height:1.2px;background:#8e8ea0"></div>
<div class="abs" style="left:0;top:448.4px;width:800px;height:1.6px;background:#c0c0d6"></div><div class="abs" style="left:0;top:448px;width:65px;height:2px;background:#a2a2ba"></div>
<div id="sbtxt"><span class="sx">Indicate an edge as first selection item for measure</span></div>
<div class="abs" style="left:569px;top:434.6px;width:186px;height:12.4px;background:#fff;border:1px solid #c4c4d4"></div>
<div class="abs" style="left:756.5px;top:435px;width:16px;height:12px;background:#e6e6f2;border:1px solid #fafaff;border-right-color:#8a8a9c;border-bottom-color:#8a8a9c"></div>
<div class="abs" style="left:779.5px;top:435px;width:16px;height:12px;background:#e6e6f2;border:1px solid #fafaff;border-right-color:#8a8a9c;border-bottom-color:#8a8a9c"></div>
<svg class="abs" style="left:0;top:410px" width="800" height="40" viewBox="0 410 800 40">
  <defs>
    <path id="dd" d="M0,0h4.4l-2.2,2.4z" fill="#111"/>
    <g id="sep"><rect x="0" y="413.5" width="1.2" height="11" fill="#f8f8ff"/><rect x="1.2" y="414" width=".8" height="11" fill="#a8a8bc"/></g>
  </defs>
  <use href="#sep" x="2.5"/><use href="#sep" x="191.5"/><use href="#sep" x="307"/><use href="#sep" x="531"/><use href="#sep" x="560"/><use href="#sep" x="626"/><use href="#sep" x="655"/>
  <!-- new -->
  <path d="M12,417.5h7.5l2.6,2.6v9.4h-10.1z" fill="#fffbd0" stroke="#c9c088" stroke-width=".6"/>
  <!-- open -->
  <path d="M27.5,420h4l1,1.2h6v7.6h-11z" fill="#d9a514"/><path d="M27.5,428.8l2.4,-5.6h10.6l-2.4,5.6z" fill="#f6d04a" stroke="#8a6a08" stroke-width=".5"/><path d="M36,418.4l2.6,-1l.6,1.8" fill="none" stroke="#2a6a2a" stroke-width=".8"/>
  <!-- save -->
  <rect x="45.5" y="417.6" width="11.6" height="11.8" fill="#6a7212" stroke="#2a2e06" stroke-width=".6"/><rect x="47.6" y="418.4" width="7.4" height="4.6" fill="#f4f2c0"/><rect x="48.4" y="425" width="5.8" height="4" fill="#1a1a10"/><rect x="49.2" y="425.8" width="1.6" height="2.6" fill="#e8e8d0"/>
  <!-- print -->
  <path d="M64.5,421l3,-3.4h6.5l-2,3.4z" fill="#f8f8f8" stroke="#666" stroke-width=".5"/><path d="M62.5,422.4h11l2,-1.8v5.6l-2,2.6h-11z" fill="#d8d27a" stroke="#555" stroke-width=".5"/><rect x="64" y="427" width="8" height="2.4" fill="#888a50"/><rect x="66.8" y="419.6" width="2.6" height="1.2" fill="#2ab8c8"/>
  <!-- cut (disabled) -->
  <g stroke="#b9b9c6" stroke-width="1.3" fill="none"><path d="M83,417.5l5.5,8.5M90.5,417.5l-5.5,8.5"/><circle cx="84.4" cy="427.6" r="1.8"/><circle cx="89.6" cy="427.6" r="1.8"/></g>
  <!-- copy (disabled) -->
  <g fill="#e8e8f0" stroke="#b4b4c2" stroke-width=".7"><rect x="98.6" y="417.8" width="6.6" height="8"/><rect x="102.4" y="420.8" width="7" height="8.6"/></g>
  <!-- paste -->
  <rect x="115.6" y="418.6" width="9" height="9.6" fill="#8a7a2a" stroke="#3a3208" stroke-width=".6"/><rect x="117.8" y="417.6" width="4.6" height="2.4" fill="#3a3a3a"/><rect x="120.6" y="423" width="6.6" height="6.6" fill="#f2f2fa" stroke="#444" stroke-width=".5"/><rect x="121.8" y="426" width="4.2" height="2" fill="#2a4ab8"/>
  <!-- undo -->
  <path d="M134.6,422.4l3.6,-3.2v2q6.4,-.6 7,4.6q.2,2.6 -2.2,3.6q1,-3.6 -4.8,-4v2.2z" fill="#1fa854" stroke="#0a5a2a" stroke-width=".5"/><use href="#dd" x="144.6" y="429.6"/>
  <!-- redo disabled -->
  <path d="M163.6,422.4l-3.6,-3.2v2q-6.4,-.6 -7,4.6q-.2,2.6 2.2,3.6q-1,-3.6 4.8,-4v2.2z" fill="#d6d6e2" stroke="#b4b4c4" stroke-width=".5"/><use href="#dd" x="163.4" y="429.6"/>
  <!-- whats this -->
  <path d="M171,418l5.4,5l-2.4,.4l1.6,3.2l-1.4,.6l-1.6,-3.2l-1.6,1.6z" fill="#f4e67a" stroke="#444" stroke-width=".5"/><text x="175.8" y="428.6" font-family="'Liberation Sans',sans-serif" font-weight="bold" font-size="11" fill="#1c2c9c">?</text>
  <!-- f(x) -->
  <text x="199.4" y="428" font-family="'Liberation Serif',serif" font-style="italic" font-weight="bold" font-size="12.5" fill="#111">f</text><text x="204.4" y="428" font-family="'Liberation Sans',sans-serif" font-weight="bold" font-size="6.4" fill="#111" textLength="9.5" lengthAdjust="spacingAndGlyphs">(x)</text>
  <!-- chat -->
  <ellipse cx="223.4" cy="422.4" rx="5.8" ry="4.4" fill="#f2f2f2" stroke="#222" stroke-width=".9"/><path d="M219.6,425.6l-1.6,3.6l4.4,-2.6" fill="#f2f2f2" stroke="#222" stroke-width=".8"/><path d="M220.6,421.6q2.6,-2.2 5.4,0q-2.8,2.4 -5.4,0z" fill="none" stroke="#555" stroke-width=".6"/>
  <!-- gray disabled -->
  <g fill="none" stroke="#c2c2d0" stroke-width="1"><circle cx="238.8" cy="420.6" r="1.6"/><circle cx="238.8" cy="425.4" r="1.8"/></g>
  <!-- table -->
  <rect x="249.8" y="417.8" width="10.6" height="11" fill="#4a4a52"/><rect x="249.8" y="417.8" width="10.6" height="2.6" fill="#1c2ccc"/><path d="M249.8,423.2h10.6M249.8,426h10.6M253.4,420.4v8.4M257,420.4v8.4" stroke="#7a7a84" stroke-width=".5"/><use href="#dd" x="260" y="429.6"/>
  <!-- lock -->
  <path d="M270.4,422v-1.6q0,-2.8 2.6,-2.8q2.6,0 2.6,2.8v1.6" fill="none" stroke="#6a6a6a" stroke-width="1.3"/><rect x="268.6" y="421.8" width="9" height="7.4" fill="#7c7c78" stroke="#2a2a2a" stroke-width=".7"/><rect x="270.2" y="423.2" width="3" height="4.6" fill="#b4b4b0"/><rect x="273.6" y="423.600" width="2.600" height="4" fill="#222"/><use href="#dd" x="278.4" y="429.6"/>
  <!-- brace -->
  <rect x="286.4" y="417.6" width="4" height="3.4" fill="#38a0a0" stroke="#333" stroke-width=".4"/><rect x="286.4" y="421.8" width="4" height="3.4" fill="#b8c84a" stroke="#333" stroke-width=".4"/><rect x="286.4" y="426" width="4" height="3.4" fill="#38a0a0" stroke="#333" stroke-width=".4"/><path d="M291.6,417.6q1.6,0 1.6,2v2.2q0,1.6 1.4,1.6q-1.4,0 -1.4,1.6v2.4q0,2 -1.6,2" fill="none" stroke="#333" stroke-width=".8"/><path d="M295.6,422.4h2M295.6,424.4h2" stroke="#333" stroke-width=".7"/>
  <!-- fly -->
  <path d="M316,418.4l4.4,4l5.2,-1.6l-3,3.4l4,3.2l-5.6,-1l-2.6,3.2l-.8,-4l-4.4,-1.2l3.8,-1.6z" fill="#3aa0dc" stroke="#0a4a8a" stroke-width=".5"/>
  <!-- fit all -->
  <rect x="333" y="417.8" width="11.6" height="11.4" fill="#e8e87a" stroke="#1a7a8a" stroke-width=".8"/><path d="M335,419.8l2.6,2.6M342.6,419.8l-2.6,2.6M335,427.2l2.6,-2.6M342.6,427.2l-2.6,-2.6" stroke="#111" stroke-width="1"/><rect x="337.6" y="422.2" width="2.4" height="2.4" fill="#111"/>
  <!-- pan -->
  <g fill="#1c44b8"><path d="M356.2,417l2.4,3h-4.8zM356.2,430l2.4,-3h-4.8zM349.8,423.5l3,-2.4v4.8zM362.6,423.5l-3,-2.4v4.8z"/><rect x="355.4" y="419.6" width="1.6" height="7.8"/><rect x="352.4" y="422.7" width="7.8" height="1.6"/></g>
  <!-- rotate -->
  <path d="M367.4,421.6q5.4,-4 11,-1l-1,2.2l3,-.4" fill="none" stroke="#1c3c9c" stroke-width="1"/><path d="M368.4,424.4q2,-2.6 5.2,-1.6l3.6,1.6q1.2,1 .2,2.2l-2.6,2.6h-4.2z" fill="#f0c8a0" stroke="#6a3a1a" stroke-width=".5"/><ellipse cx="374" cy="427.6" rx="3.4" ry="1.8" fill="#3ab0e0" stroke="#0a4a8a" stroke-width=".4"/>
  <!-- zoom in -->
  <circle cx="389.8" cy="421.8" r="3.8" fill="#e8f8ff" stroke="#1a5a9c" stroke-width="1.3"/><path d="M392.6,424.8l4,4.2" stroke="#1a3a7a" stroke-width="1.8"/><path d="M387.8,421.8h4M389.8,419.8v4" stroke="#111" stroke-width=".8"/>
  <!-- zoom out -->
  <circle cx="407.4" cy="421.8" r="3.8" fill="#e8f8ff" stroke="#1a5a9c" stroke-width="1.3"/><path d="M410.2,424.8l4,4.2" stroke="#1a3a7a" stroke-width="1.8"/><path d="M405.4,421.8h4" stroke="#111" stroke-width=".9"/>
  <!-- normal view -->
  <path d="M420.6,427.4l4,-3.4h7.6l-3.4,3.4z" fill="#3ab8d8" stroke="#0a5a7a" stroke-width=".5"/><path d="M426.4,425.6v-6.6" stroke="#c84a1a" stroke-width="1"/><path d="M426.4,417l1.8,2.6h-3.6z" fill="#c84a1a"/><path d="M421,428.6h7.6" stroke="#c8b83a" stroke-width=".9"/>
  <!-- quad view -->
  <rect x="438.4" y="417.8" width="11.4" height="11.4" fill="#1c54c8"/><rect x="439.6" y="419" width="4.2" height="4.2" fill="#3ac8f0"/><rect x="444.6" y="419" width="4.2" height="4.2" fill="#3ac8f0"/><rect x="439.6" y="424" width="4.2" height="4.2" fill="#3ac8f0"/><rect x="444.6" y="424" width="4.2" height="4.2" fill="#3ac8f0"/>
  <!-- iso cube -->
  <path d="M455.4,420.6l3.6,-3h8.4l-3.6,3z" fill="#7adcf8" stroke="#1a6a9a" stroke-width=".5"/><rect x="455.4" y="420.6" width="8.4" height="8.4" fill="#3ac0f0" stroke="#1a6a9a" stroke-width=".5"/><path d="M463.8,420.6l3.6,-3v8.4l-3.6,3z" fill="#1a8ad0" stroke="#1a6a9a" stroke-width=".5"/><use href="#dd" x="465.6" y="429.6"/>
  <!-- shading cylinder -->
  <rect x="474.6" y="417.4" width="10.4" height="12" rx="2.2" fill="#8a8a3a" stroke="#3a3a10" stroke-width=".6"/><rect x="476.4" y="419.4" width="6.8" height="9" fill="#1c3cc8"/><ellipse cx="479.8" cy="419.6" rx="3.4" ry="1.4" fill="#3ac8f0"/><use href="#dd" x="484.8" y="429.6"/>
  <!-- img1 -->
  <rect x="492.6" y="417.8" width="11.6" height="11.2" fill="#5ab8e0" stroke="#3a6a8a" stroke-width=".6"/><path d="M494.6,426.4l3,-5.6l2.2,1.2l2.6,-2.6" stroke="#e8d87a" stroke-width="1.6" fill="none"/><path d="M495,427.6l5,-2.4" stroke="#fafafa" stroke-width="1.2"/>
  <!-- img2 -->
  <rect x="510.2" y="417.8" width="11.6" height="11.2" fill="#3ac0e8" stroke="#3a6a8a" stroke-width=".6"/><path d="M513,426.6q2,-4.6 6.6,-3.6" stroke="#e8d87a" stroke-width="1.6" fill="none"/><path d="M512.6,427.8l4.4,-2" stroke="#fafafa" stroke-width="1.2"/>
  <!-- swap visible -->
  <path d="M541.6,422.6h9.6v5.8h-9.6z" fill="#e8e8ee" stroke="#222" stroke-width=".8"/><path d="M541.6,422.6l1.6,-1.8h9.4l-1.4,1.8" fill="#cfcfd8" stroke="#222" stroke-width=".6"/><path d="M543,425.4h6.6" stroke="#222" stroke-width="1"/><circle cx="542.4" cy="418.6" r="1.7" fill="#2aa8c8"/><path d="M545,417.8q4,-1.6 6,2.2" fill="none" stroke="#1c3cc8" stroke-width=".9"/><path d="M551.4,421l-1.8,-1.2l2.2,-.8z" fill="#1c3cc8"/>
  <!-- measure between (active, orange) -->
  <g stroke="#f07a1a" stroke-width="1.1" fill="#f07a1a"><path d="M570.6,420.4h10.8"/><path d="M569.6,420.4l3,-2v4zM582.4,420.4l-3,-2v4z" stroke="none"/></g><rect x="569.8" y="424.4" width="12.4" height="4.8" fill="#f08a2a"/><path d="M571.4,426.8h1.4m1.2,0h1.4m1.2,0h1.4m1.2,0h1.4" stroke="#fde8c8" stroke-width="1.2"/>
  <!-- measure item -->
  <rect x="589.4" y="417.6" width="7.6" height="11.8" fill="#2c2c30"/><rect x="590.8" y="419" width="4.8" height="2.8" fill="#5a5a60"/><path d="M590.8,423.8h4.8M590.8,425.8h4.8M590.8,427.6h4.8" stroke="#77777e" stroke-width=".8"/><rect x="587" y="420.6" width="4.2" height="4.2" fill="#42b8a8"/><rect x="595.2" y="425.8" width="3.2" height="3.2" fill="#1a1a1c"/>
  <!-- weight -->
  <path d="M606.6,422.4h7l1.2,7h-9.4z" fill="#c8b42a" stroke="#4a3e08" stroke-width=".6"/><circle cx="610.1" cy="419.8" r="1.8" fill="#c8b42a" stroke="#4a3e08" stroke-width=".7"/><path d="M608,424v4" stroke="#f4e88a" stroke-width="1"/>
  <!-- camera -->
  <rect x="634" y="419.8" width="12.4" height="8" rx="1" fill="#3a3a40" stroke="#111" stroke-width=".5"/><rect x="637" y="418.2" width="4.6" height="2" fill="#555"/><circle cx="640.2" cy="423.8" r="2.5" fill="#8a8a96" stroke="#ddd" stroke-width=".6"/><rect x="635" y="421" width="2" height="1.2" fill="#e8e8e8"/>
  <!-- swirl (disabled) -->
  <g fill="none" stroke="#b4b4c2" stroke-width="2"><path d="M663.600,426.400q-1.200,-6.600 5.400,-7q6.200,.4 5.200,6q-1,4 -5.200,3.400q-3.400,-.8 -2.400,-3.800q1,-2 3,-1.200"/></g>
  <!-- globe hand -->
  <circle cx="686.4" cy="423.2" r="5.6" fill="#2a5a9a" stroke="#0a1a4a" stroke-width=".8"/><path d="M682.4,420.4q2,-2.400 4.600,-1.400q.6,2 -1.400,3q-2.600,.6 -3.200,-1.600z" fill="#f2e6a0"/><path d="M685.600,424.600l1,-3.200l1.200,.2l.2,1.800l3,.8v3.400l-1.400,1.600h-3z" fill="#fafafa" stroke="#333" stroke-width=".4"/>
  <!-- axis -->
  <path d="M703.400,417.600v8.400l6.200,2.600M703.400,426l-5,3.400" fill="none" stroke="#222" stroke-width="1"/><path d="M703.400,416.400l1.400,2.400h-2.800z" fill="#222"/>
  <!-- 10.1 / 10.0 -->
  <g font-family="'Liberation Sans',sans-serif" font-weight="bold" font-size="6.6"><text x="715.400" y="423" fill="#111" textLength="9" lengthAdjust="spacingAndGlyphs">10.</text><text x="724.400" y="423" fill="#1c4ccc">1</text><text x="715.400" y="429.600" fill="#111" textLength="9" lengthAdjust="spacingAndGlyphs">10.</text><text x="724.400" y="429.600" fill="#1c4ccc">0</text></g>
  <!-- cyl teal -->
  <rect x="734.600" y="417.600" width="9.600" height="11.600" rx="2" fill="#2ab0c0" stroke="#0a4a5a" stroke-width=".6"/><ellipse cx="739.400" cy="419.400" rx="4.200" ry="1.500" fill="#8ae4ee" stroke="#0a4a5a" stroke-width=".4"/><path d="M734.600,424h9.600" stroke="#e8f8fa" stroke-width=".7"/><use href="#dd" x="744.600" y="429.600"/>
  <!-- chevrons -->
  <text x="758.400" y="420.600" font-family="'Liberation Sans',sans-serif" font-size="7" fill="#f4f4fc">»</text>
  <!-- DS CATIA logo -->
  <path d="M776.600,414.600q6,-1.600 5,2.600q-1,2.600 -4,3.400q5,.4 3.600,4.400q-1.600,3 -6.200,2.600" fill="none" stroke="#d83a2a" stroke-width="1.3"/><path d="M774.600,416.600q-4,5 -3,11.600" fill="none" stroke="#2a3ab8" stroke-width="1.200"/><path d="M781,418q4,0 3.600,4" fill="none" stroke="#e8a82a" stroke-width="1.100"/>
  <text x="773.600" y="431.400" font-family="'Liberation Sans',sans-serif" font-weight="bold" font-style="italic" font-size="5.800" fill="#3a4a9c" textLength="19" lengthAdjust="spacingAndGlyphs">CATIA</text>
  <!-- status right icons -->
  <rect x="760.600" y="437.600" width="6" height="5" fill="none" stroke="#333" stroke-width=".9"/><rect x="764" y="441" width="4.600" height="3.400" fill="#555"/>
  <circle cx="787.600" cy="441" r="3.400" fill="#e8f4ff" stroke="#333" stroke-width=".9"/><path d="M787.600,439v4" stroke="#1c4ccc" stroke-width="1.400"/><path d="M783,445h9" stroke="#333" stroke-width=".8"/>
</svg>


<div id="dlg">
  <div id="dtitle"></div>
  <div id="dbody"></div>
</div>
<div class="dt" style="left:478.4px;top:146px;color:#1c1c1c"><span class="sx" style="transform:scaleX(.875)">Measure Between</span></div>
<div class="dt" style="left:696px;top:145.5px;color:#333;font-size:8.5px"><span class="sx">?</span></div>
<svg class="abs" style="left:722px;top:146px" width="10" height="10" viewBox="0 0 10 10"><path d="M1.6,1.6L7.4,7.4M7.4,1.6L1.6,7.4" stroke="#333" stroke-width=".9"/></svg>
<!-- Definition group -->
<div class="gb" style="left:479px;top:169.3px;width:255.7px;height:106px"></div>
<div class="gl" style="left:484px;top:165.6px;background:#eedfcf"><span class="sx">Definition</span></div>
<div class="ib" style="left:480.5px;background:#f4eee4;border-color:#8f887c;border-right-color:#fbf6ee;border-bottom-color:#fbf6ee;box-shadow:none"></div>
<div class="ib" style="left:498px"></div>
<div class="ib" style="left:515.5px"></div>
<div class="ib" style="left:533px"></div>
<div class="ib" style="left:568px"></div>
<svg class="abs" style="left:480px;top:177px" width="110" height="20" viewBox="480 177 110 20">
  <!-- measure icons -->
  <g id="rul"><rect x="482.800" y="187.800" width="12.400" height="5" fill="#6a5fa6" stroke="#4cc0dc" stroke-width=".7"/><path d="M484.400,190.200h1.400m1.200,0h1.400m1.200,0h1.400m1.200,0h1.400" stroke="#f6f2fa" stroke-width="1.500"/></g>
  <use href="#rul" x="17.5"/><use href="#rul" x="35"/>
  <g stroke="#2a3ad0" stroke-width="1.1" fill="#2a3ad0"><path d="M484,183.5H494"/><path d="M483,183.5l3,-2v4z M495,183.5l-3,-2v4z" stroke="none"/></g>
  <g stroke="#2a3ad0" stroke-width="1" fill="#2a3ad0"><path d="M500.5,183.5H512.5M506.5,181V186"/><path d="M506,183.5l-2.6,-2v4z M507,183.5l2.6,-2v4z M500.5,183.5l2.4,-2v4z M512.5,183.5l-2.4,-2v4z" stroke="none"/></g>
  <g stroke="#2a3ad0" stroke-width="1" fill="none"><path d="M519,181.4H529M519,185.6H529M521,181.4V185.6"/><path d="M530.4,181.4l-3,-1.8v3.6z M517.6,185.6l3,-1.8v3.6z" fill="#2a3ad0" stroke="none"/></g>
  <g id="cal"><rect x="538.5" y="180.2" width="8" height="12.2" fill="#2c2c30"/><rect x="540" y="181.6" width="5" height="3" fill="#5a5a60"/><path d="M540,186.5h5M540,188.5h5M540,190.5h5" stroke="#77777e" stroke-width=".8"/><rect x="536.5" y="183.5" width="4.4" height="4.4" fill="#42b8a8"/><rect x="544.6" y="188.6" width="3.4" height="3.4" fill="#1a1a1c"/></g>
  <use href="#cal" x="35"/>
  <path d="M571.5,181.2l4,3.6m0,-3.6l-4,3.6" stroke="#1a1a1c" stroke-width="1"/>
</svg>
<!-- cube picture -->
<svg class="abs" style="left:634px;top:176px" width="60" height="46" viewBox="634 176 60 46">
  <path d="M673,199.5 V187 L685.3,179.6 V195" fill="none" stroke="#22e83a" stroke-width="1.2"/>
  <path d="M654.8,190.6 L666.6,184 L685.8,194.6 L674.2,201.4 Z" fill="#2f86e6"/>
  <path d="M654.8,190.6 L674.2,201.4 L674.2,220.2 L654.8,209.4 Z" fill="#1162cf"/>
  <path d="M674.2,201.4 L685.8,194.6 L685.8,213.4 L674.2,220.2 Z" fill="#0b55bd"/>
  <ellipse cx="680.2" cy="206.4" rx="2.4" ry="3.1" fill="#0a47a4"/>
  <path d="M673,199.5 V187.4" stroke="#22e83a" stroke-width="1.2"/>
  <path d="M637.4,201.2 L646.4,196.4 L656.4,201.4 L647.4,206.4 Z" fill="#e8262a"/>
  <path d="M637.4,201.2 L647.4,206.4 L647.4,216.4 L637.4,211.2 Z" fill="#d01218"/>
  <path d="M647.4,206.4 L656.4,201.4 L656.4,211.4 L647.4,216.4 Z" fill="#a80c12"/>
  <path d="M650.5,215.6 L659.8,221.4 L674.4,213.8" fill="none" stroke="#22e83a" stroke-width="1.2"/>
  <g font-family="'Liberation Sans',sans-serif" font-weight="bold" font-size="6.5" fill="#111"><text x="677.6" y="186.4">2</text><text x="664" y="221">1</text></g>
</svg>
<div class="dt" style="left:481px;top:209.8px"><span class="sx">Selection 1 mode:</span></div>
<div class="dt" style="left:481px;top:223.8px"><span class="sx">Selection 2 mode:</span></div>
<div class="dcb" style="left:539.5px;top:206.4px;width:95.5px;height:14.4px"><span class="sx">Edge only</span><svg class="chev" style="right:4px;top:4.5px" viewBox="0 0 6 4"><path d="M.5 .5L3 3.2L5.5 .5" fill="none" stroke="#444" stroke-width=".8"/></svg></div>
<div class="dcb" style="left:539.5px;top:220.6px;width:95.5px;height:14.4px"><span class="sx">Any geometry</span><svg class="chev" style="right:4px;top:4.5px" viewBox="0 0 6 4"><path d="M.5 .5L3 3.2L5.5 .5" fill="none" stroke="#444" stroke-width=".8"/></svg></div>
<div class="abs" style="left:480px;top:243px;width:255px;height:1px;background:#d8cfc0;box-shadow:0 1px 0 rgba(255,255,255,.7)"></div>
<div class="abs" style="left:481px;top:248.6px;width:7.5px;height:7.5px;background:#fdfce2;border:.8px solid #5a5a4a"></div>
<div class="dt" style="left:491px;top:248.3px"><span class="sx">Other axis :</span></div>
<div class="abs" style="left:541px;top:247.4px;width:63.6px;height:11.4px;background:#fff;border:1px solid #b4b4b4;font-size:8.2px;line-height:10.6px;color:#8a8a8a;white-space:nowrap"><span class="sx" style="transform:scaleX(.905);margin-left:2px">No selection</span></div>
<div class="dt" style="left:481px;top:262.7px"><span class="sx">Calculation mode:</span></div>
<div class="dcb" style="left:541px;top:261px;width:95px;height:13.4px;line-height:12.4px"><span class="sx">Exact else approximate</span><svg class="chev" style="right:4px;top:4px" viewBox="0 0 6 4"><path d="M.5 .5L3 3.2L5.5 .5" fill="none" stroke="#444" stroke-width=".8"/></svg></div>
<!-- Results group -->
<div class="gb" style="left:479px;top:279.6px;width:255.7px;height:82.2px"></div>
<div class="gl" style="left:484px;top:276px;background:#f6e8d0"><span class="sx">Results</span></div>
<div class="dt" style="left:481px;top:288.5px"><span class="sx">Calculation mode:</span></div>
<div class="dt" style="left:552px;top:288.5px"><span class="sx">Exact</span></div>
<div class="dt" style="left:481px;top:299.6px"><span class="sx">Selection 1:</span></div>
<div class="dt" style="left:552px;top:299.6px"><span class="sx" style="transform:scaleX(.868)">Line on EdgeFillet.1...Swivel</span></div>
<div class="dt" style="left:481px;top:309.5px"><span class="sx">Selection 2:</span></div>
<div class="dt" style="left:552px;top:309.5px"><span class="sx" style="transform:scaleX(.885)">Line on Hole.1...Swivel</span></div>
<div class="dt" style="left:481px;top:321.5px"><span class="sx">Minimum distance:</span></div>
<div class="fld" style="left:551px;top:321px;width:58.5px;height:11.6px"><span class="sx">1in</span></div>
<div class="dt" style="left:481px;top:335.6px"><span class="sx">Angle:</span></div>
<div class="fld" style="left:551px;top:334.6px;width:58.5px;height:11.6px"><span class="sx">90deg</span></div>
<div class="dt" style="left:481px;top:349.5px"><span class="sx">Components:</span></div>
<div class="dt" style="left:545.8px;top:349.5px"><span class="sx">X</span></div>
<div class="fld" style="left:551px;top:348.6px;width:58px;height:11.6px"><span class="sx">1in</span></div>
<div class="dt" style="left:609px;top:349.5px"><span class="sx">Y</span></div>
<div class="fld" style="left:614px;top:348.6px;width:57px;height:11.6px"><span class="sx">0in</span></div>
<div class="dt" style="left:670.8px;top:349.5px"><span class="sx">Z</span></div>
<div class="fld" style="left:676px;top:348.6px;width:58px;height:11.6px"><span class="sx">0in</span></div>
<!-- bottom row -->
<div class="abs" style="left:479.6px;top:366px;width:6.4px;height:6.4px;background:#e08a2a;border:1px solid #8a5a2a;box-shadow:inset 1px 1px 0 #f4c27a"></div>
<div class="dt" style="left:489.5px;top:365.6px"><span class="sx" style="transform:scaleX(.865)">Keep measure</span></div>
<div class="btn" style="left:541.3px;top:364.8px;width:63px;height:11.6px"><span class="sx">Create geometry</span></div>
<div class="btn" style="left:684.8px;top:364.8px;width:50px;height:11.6px"><span class="sx">Customize...</span></div>
<div class="btn" style="left:648.8px;top:383.3px;width:40.4px;height:11.4px;outline:.5px dotted #555;outline-offset:-2.5px"><span class="sx" style="margin-left:9px">OK</span></div>
<div class="btn" style="left:694.3px;top:383.3px;width:40.4px;height:11.4px"><span class="sx" style="margin-left:8px">Cancel</span></div>
<svg class="abs" style="left:636px;top:380px" width="72" height="16" viewBox="636 380 72 16">
  <defs><radialGradient id="gG" cx=".4" cy=".35" r=".7"><stop offset="0" stop-color="#9dffa0"/><stop offset=".5" stop-color="#1cc02a"/><stop offset="1" stop-color="#0a6a14"/></radialGradient><radialGradient id="gR" cx=".4" cy=".35" r=".7"><stop offset="0" stop-color="#ff9a8a"/><stop offset=".5" stop-color="#e02a1c"/><stop offset="1" stop-color="#7a0a08"/></radialGradient></defs>
  <circle cx="656.6" cy="389" r="2.6" fill="url(#gG)"/>
  <circle cx="701.6" cy="389" r="2.6" fill="url(#gR)"/>
  <circle cx="643.6" cy="387.6" r="3.8" fill="#fff" fill-opacity=".85" stroke="#2a8be8" stroke-width="1.7"/>
</svg>
<!-- bottom-left globe corner -->
<svg class="abs" style="left:474px;top:366px" width="40" height="34" viewBox="0 0 40 34"><defs><radialGradient id="gl1" cx="1" cy="41" r="34" gradientUnits="userSpaceOnUse"><stop offset="0" stop-color="#3f5f86"/><stop offset=".42" stop-color="#4f7aa4"/><stop offset=".56" stop-color="#8cc6e6"/><stop offset=".62" stop-color="#c8d8d0" stop-opacity=".9"/><stop offset=".68" stop-color="#f6bf62" stop-opacity=".75"/><stop offset=".82" stop-color="#fbd58e" stop-opacity=".4"/><stop offset="1" stop-color="#fde8c0" stop-opacity="0"/></radialGradient></defs><rect width="40" height="34" fill="url(#gl1)"/></svg>

</body>
</html>
